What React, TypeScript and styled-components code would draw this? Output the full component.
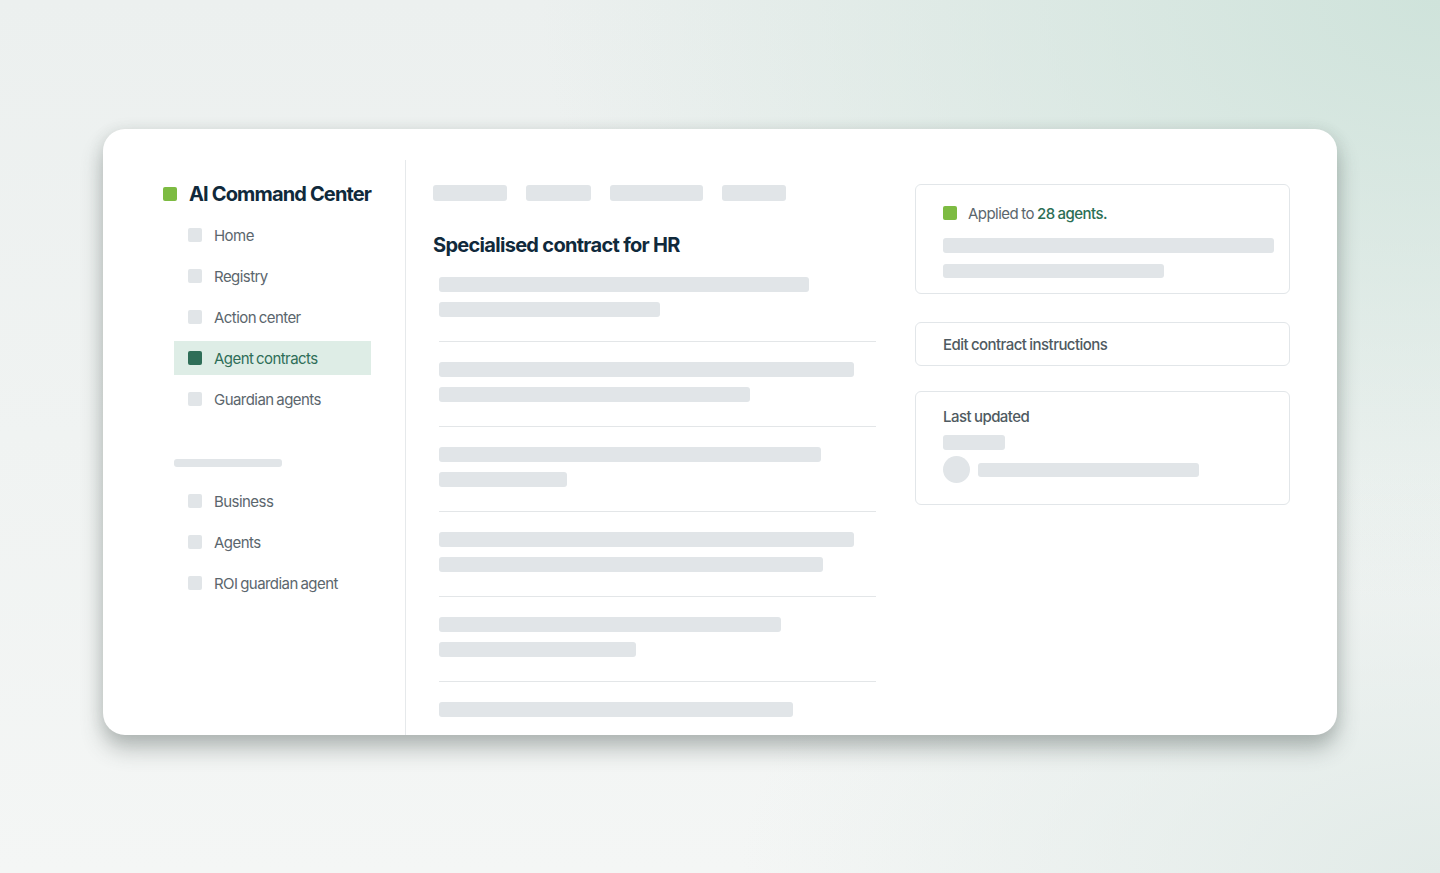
import styled, { createGlobalStyle } from 'styled-components';

const GlobalStyle = createGlobalStyle`
  html, body {
    margin: 0;
    padding: 0;
  }
  body {
    font-family: Inter, "Noto Sans", "Liberation Sans", sans-serif;
  }
`;

const Page = styled.div`
  width: 1440px;
  height: 873px;
  box-sizing: border-box;
  padding: 129px 0 0 103px;
  overflow: hidden;
  background:
    radial-gradient(ellipse 900px 600px at 100% 0%, #cfe3db 0%, rgba(207, 227, 219, 0) 100%),
    radial-gradient(ellipse 700px 400px at 100% 100%, #e2ebe8 0%, rgba(226, 235, 232, 0) 100%),
    linear-gradient(180deg, #ecf0ef 0%, #f4f6f5 100%);
`;

const Window = styled.div`
  width: 1234px;
  height: 606px;
  background: #fff;
  border-radius: 22px;
  overflow: hidden;
  display: flex;
  box-shadow: 0 14px 22px rgba(60, 72, 68, 0.32), 0 2px 16px rgba(60, 72, 68, 0.12);
`;

const Sidebar = styled.div`
  width: 303px;
  flex-shrink: 0;
  box-sizing: border-box;
  margin-top: 31px;
  padding: 22px 34px 0 60px;
  border-right: 1px solid #e6e9eb;
`;

const Brand = styled.div`
  display: flex;
  align-items: center;
  gap: 12px;
  height: 24px;
  white-space: nowrap;
  font-size: 20px;
  font-weight: 700;
  letter-spacing: -0.85px;
  color: #10293b;
  margin-bottom: 12px;
`;

const Square = styled.span<{ $color: string; $size?: number }>`
  display: inline-block;
  flex-shrink: 0;
  width: ${p => p.$size ?? 14}px;
  height: ${p => p.$size ?? 14}px;
  border-radius: 2px;
  background: ${p => p.$color};
`;

const NavList = styled.ul`
  list-style: none;
  margin: 0 0 0 11px;
  padding: 0;
  display: flex;
  flex-direction: column;
  gap: 7px;
`;

const NavItem = styled.li<{ $active?: boolean }>`
  display: flex;
  align-items: center;
  gap: 12px;
  height: 34px;
  padding-left: 14px;
  white-space: nowrap;
  font-size: 15px;
  letter-spacing: -0.55px;
  word-spacing: -1px;
  color: ${p => (p.$active ? '#2e6e58' : '#5b666d')};
  background: ${p => (p.$active ? '#deede6' : 'transparent')};
`;

const SectionBar = styled.div`
  width: 108px;
  height: 8px;
  border-radius: 3px;
  background: #e1e5e8;
  margin: 43px 0 17px 11px;
`;

const Main = styled.div`
  width: 443px;
  flex-shrink: 0;
  padding: 56px 0 0 27px;
`;

const Tabs = styled.div`
  display: flex;
  gap: 19px;
`;

const Bar = styled.div<{ $w: number; $h?: number }>`
  width: ${p => p.$w}px;
  height: ${p => p.$h ?? 15}px;
  border-radius: 3px;
  background: #e1e5e8;
  flex-shrink: 0;
`;

const Title = styled.h1`
  margin: 32px 0 20px;
  font-size: 20px;
  line-height: 24px;
  font-weight: 700;
  letter-spacing: -0.7px;
  color: #10293b;
`;

const Rows = styled.div`
  margin-left: 6px;
`;

const Row = styled.div`
  display: flex;
  flex-direction: column;
  gap: 10px;
  padding: 20px 0 24px;
  border-bottom: 1px solid #e3e6e8;

  &:first-child {
    padding-top: 0;
  }
`;

const Panel = styled.div`
  width: 375px;
  flex-shrink: 0;
  margin: 55px 0 0 39px;
  display: flex;
  flex-direction: column;
`;

const Card = styled.div<{ $gap: number }>`
  box-sizing: border-box;
  border: 1.5px solid #e2e6e9;
  border-radius: 6px;
  padding: 0 15px 0 27px;
  margin-bottom: ${p => p.$gap}px;
  display: flex;
  flex-direction: column;
`;

const Applied = styled.div`
  display: flex;
  align-items: center;
  gap: 11px;
  height: 18px;
  margin: 19px 0 16px;
  white-space: nowrap;
  font-size: 15px;
  letter-spacing: -0.55px;
  word-spacing: -0.5px;
  color: #5b666d;

  b {
    font-weight: 500;
    color: #2b6e55;
  }
`;

const CardLabel = styled.div<{ $h: number; $top?: number }>`
  display: flex;
  align-items: center;
  height: ${p => p.$h}px;
  margin-top: ${p => p.$top ?? 0}px;
  white-space: nowrap;
  font-size: 15px;
  font-weight: 500;
  letter-spacing: -0.55px;
  word-spacing: -0.5px;
  color: #4f5a61;
`;

const Author = styled.div`
  display: flex;
  align-items: center;
  gap: 8px;
  margin: 6px 0 21px;
`;

const Avatar = styled.div`
  width: 27px;
  height: 27px;
  border-radius: 50%;
  background: #e1e5e8;
`;

const Spacer = styled.div<{ $h: number }>`
  height: ${p => p.$h}px;
`;

const topNav = ['Home', 'Registry', 'Action center', 'Agent contracts', 'Guardian agents'];
const bottomNav = ['Business', 'Agents', 'ROI guardian agent'];
const tabWidths = [74, 65, 93, 64];
const rowBars = [
  [370, 221],
  [415, 311],
  [382, 128],
  [415, 384],
  [342, 197],
  [354],
];

export default function App() {
  return (
    <>
      <GlobalStyle />
      <Page>
        <Window>
          <Sidebar>
            <Brand>
              <Square $color="#7dbb42" />
              AI Command Center
            </Brand>
            <NavList>
              {topNav.map(label => (
                <NavItem key={label} $active={label === 'Agent contracts'}>
                  <Square $color={label === 'Agent contracts' ? '#2f6e58' : '#e1e5e8'} />
                  {label}
                </NavItem>
              ))}
            </NavList>
            <SectionBar />
            <NavList>
              {bottomNav.map(label => (
                <NavItem key={label}>
                  <Square $color="#e1e5e8" />
                  {label}
                </NavItem>
              ))}
            </NavList>
          </Sidebar>

          <Main>
            <Tabs>
              {tabWidths.map((w, i) => (
                <Bar key={i} $w={w} $h={16} />
              ))}
            </Tabs>
            <Title>Specialised contract for HR</Title>
            <Rows>
              {rowBars.map((bars, i) => (
                <Row key={i}>
                  {bars.map((w, j) => (
                    <Bar key={j} $w={w} />
                  ))}
                </Row>
              ))}
            </Rows>
          </Main>

          <Panel>
            <Card $gap={28}>
              <Applied>
                <Square $color="#7dbb42" />
                <span>
                  Applied to <b>28 agents.</b>
                </span>
              </Applied>
              <Bar $w={331} />
              <Spacer $h={11} />
              <Bar $w={221} $h={14} />
              <Spacer $h={15} />
            </Card>
            <Card $gap={25}>
              <CardLabel $h={42}>Edit contract instructions</CardLabel>
            </Card>
            <Card $gap={0}>
              <CardLabel $h={18} $top={15}>Last updated</CardLabel>
              <Spacer $h={10} />
              <Bar $w={62} />
              <Author>
                <Avatar />
                <Bar $w={221} $h={14} />
              </Author>
            </Card>
          </Panel>
        </Window>
      </Page>
    </>
  );
}
